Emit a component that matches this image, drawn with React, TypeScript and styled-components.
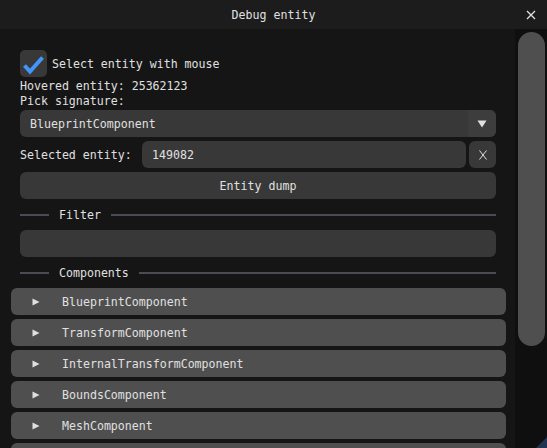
import styled, { createGlobalStyle } from "styled-components";

const GlobalStyle = createGlobalStyle`
    html, body {
        margin: 0;
        padding: 0;
        background: #151515;
        overflow: hidden;
    }
    * {
        box-sizing: border-box;
    }
`

const Window = styled.div`
    position: relative;
    width: 547px;
    height: 448px;
    display: flex;
    flex-direction: column;
    background: #151515;
    color: #e0e0e0;
    font-family: "DejaVu Sans Mono", "Liberation Mono", monospace;
    font-size: 11.6px;
    overflow: hidden;
`

const TitleBar = styled.div`
    height: 29px;
    flex-shrink: 0;
    display: grid;
    grid-template-columns: 40px 1fr 40px;
    align-items: center;
    background: #1c1c1c;
`

const TitleText = styled.span`
    grid-column: 2;
    text-align: center;
`

const CloseButton = styled.span`
    justify-self: end;
    padding-right: 11px;
    display: flex;
`

const Body = styled.div`
    flex: 1;
    display: flex;
    min-height: 0;
`

const Content = styled.div`
    flex: 1;
    display: flex;
    flex-direction: column;
    padding: 21px 19px 0 20px;
    overflow: hidden;

    & > * {
        flex-shrink: 0;
    }
`

const ScrollTrack = styled.div`
    width: 32px;
    flex-shrink: 0;
    background: #0f0f0f;
    padding: 3px 2px 0 3px;
`

const ScrollThumb = styled.div`
    height: 314px;
    background: #4f4f4f;
    border-radius: 14px;
`

const CheckRow = styled.label`
    display: flex;
    align-items: center;
    gap: 5px;
    height: 27px;
`

const CheckBox = styled.span`
    width: 27px;
    height: 27px;
    border-radius: 5px;
    background: #383838;
    display: flex;
    align-items: center;
    justify-content: center;
`

const TextLine = styled.div<{ $top?: number }>`
    height: 15px;
    line-height: 15px;
    margin-top: ${({ $top }) => $top ?? 0}px;
    white-space: pre;
`

const Frame = styled.div<{ $top?: number }>`
    height: 27px;
    margin-top: ${({ $top }) => $top ?? 0}px;
    border-radius: 6px;
    background: #383838;
    display: flex;
    align-items: center;
    overflow: hidden;
`

const ComboValue = styled.span`
    flex: 1;
    padding-left: 10px;
`

const ComboArrow = styled.span`
    width: 28px;
    height: 100%;
    background: #3d3d3d;
    display: flex;
    align-items: center;
    justify-content: center;
`

const InputRow = styled.div`
    display: flex;
    align-items: center;
    height: 27px;
    margin-top: 4px;
`

const InputLabel = styled.span`
    width: 122px;
    flex-shrink: 0;
`

const InputField = styled.div`
    flex: 1;
    height: 27px;
    border-radius: 6px;
    background: #383838;
    padding-left: 10px;
    display: flex;
    align-items: center;
`

const SmallButton = styled.div`
    width: 27px;
    height: 27px;
    margin-left: 3px;
    border-radius: 6px;
    background: #383838;
    display: flex;
    align-items: center;
    justify-content: center;
`

const Button = styled(Frame)`
    justify-content: center;
`

const Separator = styled.div`
    height: 31px;
    padding-top: 1px;
    display: flex;
    align-items: center;
    gap: 10px;
`

const SeparatorLine = styled.span<{ $grow?: boolean }>`
    height: 2px;
    background: #4b4b57;
    width: 29px;
    flex: ${({ $grow }) => ($grow ? 1 : "none")};
`

const HeaderList = styled.div`
    display: flex;
    flex-direction: column;
    gap: 4px;
    margin: 0 -10px 0 -9px;
`

const Header = styled.div`
    height: 27px;
    flex-shrink: 0;
    border-radius: 6px;
    background: #4f4f4f;
    display: flex;
    align-items: center;
    padding-left: 21px;
    gap: 22px;
`

const ResizeGrip = styled.svg`
    position: absolute;
    right: 0;
    bottom: 0;
`

const components = [
    "BlueprintComponent",
    "TransformComponent",
    "InternalTransformComponent",
    "BoundsComponent",
    "MeshComponent",
];

export default function App() {
    return (
        <Window>
            <GlobalStyle />
            <TitleBar>
                <TitleText>Debug entity</TitleText>
                <CloseButton>
                    <svg width="10" height="10" viewBox="0 0 10 10">
                        <path d="M1 1L9 9M9 1L1 9" stroke="#e0e0e0" strokeWidth="1.3" />
                    </svg>
                </CloseButton>
            </TitleBar>
            <Body>
                <Content>
                    <CheckRow>
                        <CheckBox>
                            <svg width="27" height="27" viewBox="0 0 27 27">
                                <path d="M4.5 15.5L10 21.5L22.5 7.5" fill="none" stroke="#4296fa" strokeWidth="4" />
                            </svg>
                        </CheckBox>
                        Select entity with mouse
                    </CheckRow>
                    <TextLine $top={2}>Hovered entity: 25362123</TextLine>
                    <TextLine>Pick signature:</TextLine>
                    <Frame $top={1}>
                        <ComboValue>BlueprintComponent</ComboValue>
                        <ComboArrow>
                            <svg width="10" height="8" viewBox="0 0 10 8">
                                <path d="M0.5 0.5H9.5L5 7.5Z" fill="#e0e0e0" />
                            </svg>
                        </ComboArrow>
                    </Frame>
                    <InputRow>
                        <InputLabel>Selected entity:</InputLabel>
                        <InputField>149082</InputField>
                        <SmallButton>
                            <svg width="8" height="10" viewBox="0 0 8 10">
                                <path d="M0.5 0.5L7.5 9.5M7.5 0.5L0.5 9.5" stroke="#e0e0e0" strokeWidth="1" />
                            </svg>
                        </SmallButton>
                    </InputRow>
                    <Button $top={4}>Entity dump</Button>
                    <Separator>
                        <SeparatorLine />
                        Filter
                        <SeparatorLine $grow />
                    </Separator>
                    <Frame />
                    <Separator>
                        <SeparatorLine />
                        Components
                        <SeparatorLine $grow />
                    </Separator>
                    <HeaderList>
                        {components.map((name) => (
                            <Header key={name}>
                                <svg width="8" height="8" viewBox="0 0 8 8">
                                    <path d="M0.5 0.5L7.5 4L0.5 7.5Z" fill="#e0e0e0" />
                                </svg>
                                {name}
                            </Header>
                        ))}
                        {/* next header, scrolled below the edge */}
                        <Header />
                    </HeaderList>
                </Content>
                <ScrollTrack>
                    <ScrollThumb />
                </ScrollTrack>
            </Body>
            <ResizeGrip width="11" height="11" viewBox="0 0 11 11">
                <path d="M11 0V11H0Z" fill="#213552" />
            </ResizeGrip>
        </Window>
    );
}
